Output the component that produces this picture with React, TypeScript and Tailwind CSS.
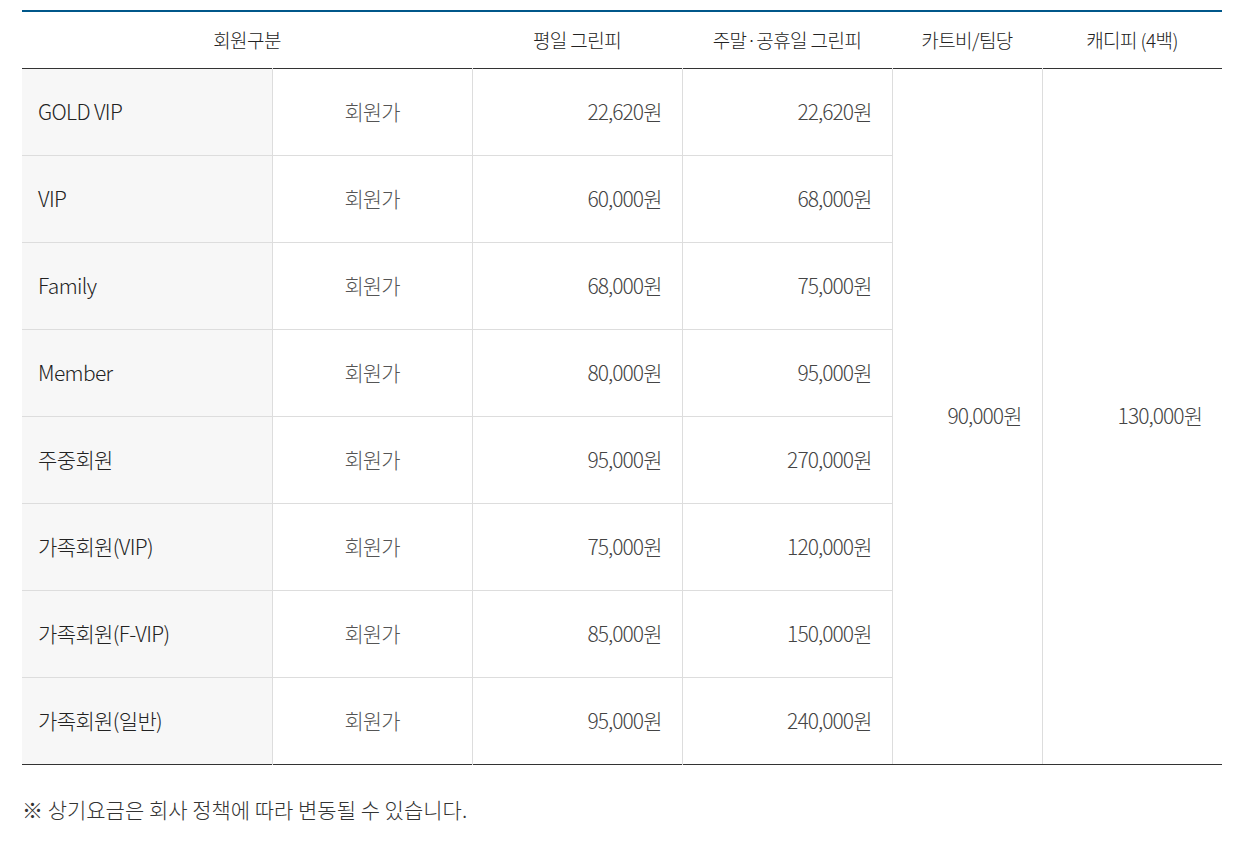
const rows = [
  { name: "GOLD VIP", weekday: "22,620원", weekend: "22,620원" },
  { name: "VIP", weekday: "60,000원", weekend: "68,000원" },
  { name: "Family", weekday: "68,000원", weekend: "75,000원" },
  { name: "Member", weekday: "80,000원", weekend: "95,000원" },
  { name: "주중회원", weekday: "95,000원", weekend: "270,000원" },
  { name: "가족회원(VIP)", weekday: "75,000원", weekend: "120,000원" },
  { name: "가족회원(F-VIP)", weekday: "85,000원", weekend: "150,000원" },
  { name: "가족회원(일반)", weekday: "95,000원", weekend: "240,000원" },
];

export default function App() {
  return (
    <div
      className="min-h-screen bg-white px-[22px] pt-[10px] font-light text-[#222]"
      style={{ fontFamily: '"Noto Sans CJK KR", "Noto Sans", sans-serif' }}
    >
      <table className="w-[1200px] table-fixed border-collapse border-t-2 border-t-[#00578a] text-[21px] tracking-[-0.045em]">
        <colgroup>
          <col className="w-[250px]" />
          <col className="w-[200px]" />
          <col className="w-[210px]" />
          <col className="w-[210px]" />
          <col className="w-[150px]" />
          <col className="w-[180px]" />
        </colgroup>
        <thead>
          <tr className="h-[57px] border-b border-b-[#333] text-[19px] tracking-[-0.03em] text-[#222]">
            <th colSpan={2} className="font-light">회원구분</th>
            <th className="font-light">평일 그린피</th>
            <th className="font-light">주말·공휴일 그린피</th>
            <th className="font-light">카트비/팀당</th>
            <th className="font-light">캐디피 (4백)</th>
          </tr>
        </thead>
        <tbody>
          {rows.map((r, i) => (
            <tr key={r.name} className="h-[87px] border-b border-b-[#ddd] last:border-b-[#333]">
              <td className="bg-[#f7f7f7] pl-4 tracking-[-0.03em] text-[#222]">{r.name}</td>
              <td className="border-l border-[#ddd] text-center text-[#555]">회원가</td>
              <td className="border-l border-[#ddd] pr-5 text-right text-[#444]">{r.weekday}</td>
              <td className="border-l border-[#ddd] pr-5 text-right text-[#444]">{r.weekend}</td>
              {i === 0 && (
                <>
                  <td rowSpan={8} className="border-l border-b border-[#ddd] border-b-[#333] pr-5 text-right text-[#444]">
                    90,000원
                  </td>
                  <td rowSpan={8} className="border-l border-b border-[#ddd] border-b-[#333] pr-5 text-right text-[#444]">
                    130,000원
                  </td>
                </>
              )}
            </tr>
          ))}
        </tbody>
      </table>
      <p className="mt-[29px] text-[21px] tracking-[0em] text-[#333]">
        ※ 상기요금은 회사 정책에 따라 변동될 수 있습니다.
      </p>
    </div>
  );
}
